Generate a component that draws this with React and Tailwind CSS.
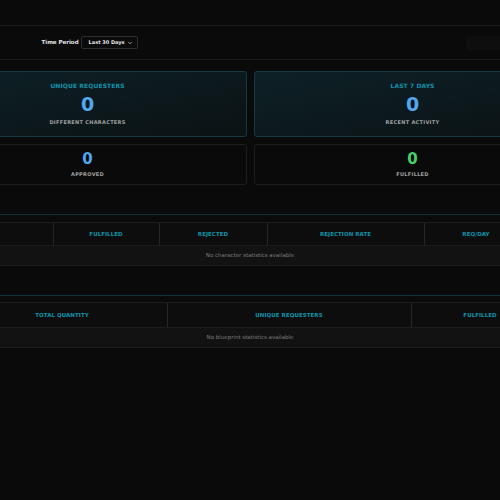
import React from 'react'

const charCols = [
  { label: '', w: 'w-[124px]' },
  { label: 'Fulfilled', w: 'w-[106px]' },
  { label: 'Rejected', w: 'w-[108px]' },
  { label: 'Rejection Rate', w: 'w-[157px]' },
  { label: 'Req/Day', w: 'w-[104px]' },
  { label: '', w: 'flex-1' },
]

const blueprintCols = [
  { label: '', w: 'w-[28px]' },
  { label: 'Total Quantity', w: 'w-[210px]' },
  { label: 'Unique Requesters', w: 'w-[244px]' },
  { label: 'Fulfilled', w: 'w-[138px]' },
  { label: '', w: 'flex-1' },
]

const StatsTable = ({ cols, empty, headH }) => (
  <div>
    <div className={`flex ${headH} border-y border-[#1c1c1c] bg-[#0d0d0d]`}>
      {cols.map((c, i) => (
        <div
          key={i}
          className={`${c.w} shrink-0 flex items-center justify-center ${i > 0 ? 'border-l border-[#262626]' : ''} overflow-hidden`}
        >
          <span className="text-[5.5px] font-bold uppercase tracking-[0.05px] text-[#0e94ab] whitespace-nowrap">{c.label}</span>
        </div>
      ))}
    </div>
    <div className="h-[20px] flex items-center justify-center bg-[#121212] border-b border-[#1c1c1c]">
      <span className="text-[5.5px] text-[#7a7a7a]">{empty}</span>
    </div>
  </div>
)

const StatCard = ({ title, value, label }) => (
  <div className="h-[66px] rounded-[3px] border border-[#123b45] bg-gradient-to-br from-[#0d2127] to-[#0b1214] flex flex-col items-center justify-center">
    <p className="text-[6px] leading-[8px] font-bold uppercase tracking-[0.1px] text-[#0e94ab]">{title}</p>
    <p className="text-[19px] leading-[22px] font-bold text-[#52a8ef] mt-[3px]">{value}</p>
    <p className="text-[5px] leading-[8px] font-semibold uppercase tracking-[0.3px] text-[#a0a0a0] mt-[3px]">{label}</p>
  </div>
)

const SmallCard = ({ value, label, color }) => (
  <div className="h-[41px] rounded-[3px] border border-[#1e1e1e] bg-[#0a0a0a] flex flex-col items-center justify-center">
    <p className={`text-[15px] leading-[14px] font-bold ${color}`}>{value}</p>
    <p className="text-[5px] leading-[7px] font-semibold uppercase tracking-[0.3px] text-[#a0a0a0] mt-[5px]">{label}</p>
  </div>
)

const App = () => {
  return (
    <div className="min-h-[500px] bg-[#0a0a0a] overflow-hidden flex justify-center font-['DejaVu_Sans',sans-serif]">

      <div className="w-[643px] shrink-0 pt-[25px]">

        <div className="h-[35px] border-y border-[#1c1c1c] flex items-center justify-between pl-[113px]">
          <div className="flex items-center gap-[2px]">
            <span className="text-[5.5px] font-bold text-[#e5e5e5] whitespace-nowrap">Time Period</span>
            <div className="w-[57px] h-[13px] rounded-[2px] border border-[#2e2e2e] bg-[#0b0b0b] flex items-center justify-between pl-[7px] pr-[4px]">
              <span className="text-[5px] font-semibold text-[#e5e5e5] whitespace-nowrap">Last 30 Days</span>
              <svg width="6" height="6" viewBox="0 0 24 24" fill="none" stroke="#bdbdbd" strokeWidth="3" strokeLinecap="round" strokeLinejoin="round">
                <path d="m6 9 6 6 6-6" />
              </svg>
            </div>
          </div>
          <div className="w-[106px] h-[14px] rounded-[2px] bg-[#0e0e0e]" />
        </div>

        <div className="grid grid-cols-2 gap-[7px] mt-[11px]">
          <StatCard title="Unique Requesters" value="0" label="Different Characters" />
          <StatCard title="Last 7 Days" value="0" label="Recent Activity" />
          <SmallCard value="0" label="Approved" color="text-[#52a8ef]" />
          <SmallCard value="0" label="Fulfilled" color="text-[#4ad06a]" />
        </div>

        <div className="mt-[29px] border-t border-[#10303a] pt-[7px]">
          <StatsTable cols={charCols} empty="No character statistics available" headH="h-[24px]" />
        </div>

        <div className="mt-[29px] border-t border-[#10303a] pt-[6px]">
          <StatsTable cols={blueprintCols} empty="No blueprint statistics available" headH="h-[26px]" />
        </div>

      </div>

    </div>
  )
}

export default App
